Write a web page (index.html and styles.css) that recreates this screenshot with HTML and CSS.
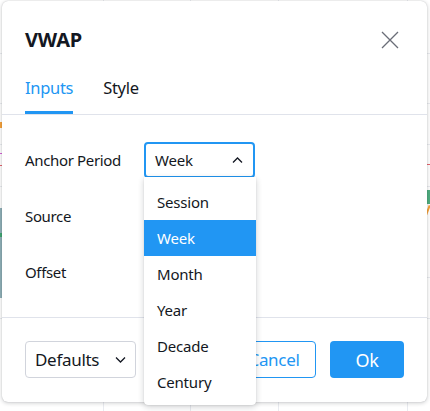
FILE: index.html
```html
<!DOCTYPE html>
<html>
<head>
<meta charset="utf-8">
<link rel="stylesheet" href="styles.css">
</head>
<body>
<div class="chart">
  <div class="mark mark-orange"></div>
  <div class="mark mark-pink"></div>
  <div class="mark mark-red"></div>
  <div class="mark mark-teal"></div>
  <div class="mark mark-green"></div>
  <div class="mark mark-rgreen"></div>
  <div class="mark mark-rorange"></div>
  <div class="mark mark-rred"></div>
</div>
<div class="dialog">
  <div class="header">
    <div class="title">VWAP</div>
    <svg class="close" width="18" height="18" viewBox="0 0 18 18"><path d="M1 1L17 17M17 1L1 17" stroke="#6a6d78" stroke-width="1.3" fill="none"/></svg>
  </div>
  <div class="tabs">
    <div class="tab active">Inputs</div>
    <div class="tab">Style</div>
  </div>
  <div class="body">
    <div class="row">
      <div class="label">Anchor Period</div>
      <div class="select">
        <span>Week</span>
        <svg width="11" height="6" viewBox="0 0 11 6"><path d="M1 5.5L5.5 1L10 5.5" stroke="#131722" stroke-width="1.3" fill="none"/></svg>
      </div>
    </div>
    <div class="row">
      <div class="label">Source</div>
    </div>
    <div class="row">
      <div class="label">Offset</div>
    </div>
  </div>
  <div class="footer">
    <div class="btn defaults">
      <span>Defaults</span>
      <svg width="11" height="6" viewBox="0 0 11 6"><path d="M1 0.5L5.5 5L10 0.5" stroke="#131722" stroke-width="1.3" fill="none"/></svg>
    </div>
    <div class="spacer"></div>
    <div class="btn cancel">Cancel</div>
    <div class="btn ok">Ok</div>
  </div>
  <div class="menu">
    <div class="item">Session</div>
    <div class="item selected">Week</div>
    <div class="item">Month</div>
    <div class="item">Year</div>
    <div class="item">Decade</div>
    <div class="item">Century</div>
  </div>
</div>
</body>
</html>
```

FILE: styles.css
```css
* { box-sizing: border-box; }
html, body { margin: 0; padding: 0; }
body {
  width: 430px;
  height: 411px;
  overflow: hidden;
  position: relative;
  background-color: #ffffff;
  background-image:
    linear-gradient(to right, transparent 103px, #e9ebf0 103px, #e9ebf0 104px, transparent 104px),
    linear-gradient(to right, transparent 190px, #e9ebf0 190px, #e9ebf0 191px, transparent 191px),
    linear-gradient(to right, transparent 278px, #e9ebf0 278px, #e9ebf0 279px, transparent 279px),
    linear-gradient(to right, transparent 407px, #e9ebf0 407px, #e9ebf0 408px, transparent 408px),
    linear-gradient(to bottom, transparent 53px, #e9ebf0 53px, #e9ebf0 54px, transparent 54px),
    linear-gradient(to bottom, transparent 103px, #e9ebf0 103px, #e9ebf0 104px, transparent 104px),
    linear-gradient(to bottom, transparent 144px, #e9ebf0 144px, #e9ebf0 145px, transparent 145px),
    linear-gradient(to bottom, transparent 186px, #e9ebf0 186px, #e9ebf0 187px, transparent 187px),
    linear-gradient(to bottom, transparent 277px, #e9ebf0 277px, #e9ebf0 278px, transparent 278px),
    linear-gradient(to bottom, transparent 318px, #e9ebf0 318px, #e9ebf0 319px, transparent 319px);
  font-family: "Noto Sans", "Open Sans", sans-serif;
  color: #131722;
}
.chart { position: absolute; inset: 0; }
.mark { position: absolute; }
.mark-orange { left: 0; top: 122px; width: 2px; height: 6px; background: #f7a23b; }
.mark-pink { left: 0; top: 153px; width: 2px; height: 1px; background: #d561d6; }
.mark-red { left: 0; top: 165px; width: 3px; height: 1px; background: #e5646e; }
.mark-teal { left: 0; top: 208px; width: 2px; height: 90px; background: #8fb0b8; }
.mark-green { left: 0; top: 233px; width: 2px; height: 4px; background: #3fa671; }
.mark-rgreen { right: 0; top: 190px; width: 3px; height: 14px; background: #4fae80; }
.mark-rorange { right: 1px; top: 205px; width: 2px; height: 10px; background: #f7a23b; transform: rotate(20deg); }
.mark-rred { right: 0; top: 164px; width: 3px; height: 1px; background: #e5646e; }

.dialog {
  position: relative;
  margin: 1px 0 0 2px;
  width: 425px;
  height: 401px;
  background: #fff;
  border-radius: 6px;
  box-shadow: 0 1px 4px rgba(19, 23, 34, 0.22), 0 0 1px rgba(19, 23, 34, 0.25);
  display: flex;
  flex-direction: column;
}
.header {
  display: flex;
  align-items: center;
  justify-content: space-between;
  height: 62px;
  padding: 16px 28px 0 23px;
}
.title {
  font-size: 20px;
  font-weight: 700;
  line-height: 24px;
  letter-spacing: -0.2px;
}
.close { display: block; }
.tabs {
  display: flex;
  gap: 30px;
  padding: 0 0 0 23px;
  height: 52px;
  border-bottom: 1px solid #e0e3eb;
}
.tab {
  font-size: 16.5px;
  line-height: 24px;
  padding-top: 13px;
  letter-spacing: -0.3px;
  border-bottom: 3px solid transparent;
}
.tab.active {
  color: #2196f3;
  border-bottom-color: #2196f3;
}
.body {
  padding: 27px 0 27px 23px;
  display: flex;
  flex-direction: column;
  gap: 20px;
  border-bottom: 1px solid #e0e3eb;
}
.row {
  height: 36px;
  display: flex;
  align-items: center;
}
.label {
  width: 119px;
  font-size: 15px;
  letter-spacing: -0.35px;
}
.select {
  width: 111px;
  height: 36px;
  border: 2px solid #2196f3;
  border-radius: 4px;
  display: flex;
  align-items: center;
  justify-content: space-between;
  padding: 0 10px 0 9px;
  font-size: 15px;
  letter-spacing: -0.2px;
}
.select svg { display: block; }
.footer {
  display: flex;
  align-items: center;
  padding: 23px 23px 24px 23px;
  flex: 1;
}
.spacer { flex: 1; }
.btn {
  height: 37px;
  border-radius: 4px;
  display: flex;
  align-items: center;
  justify-content: center;
  font-size: 17px;
  letter-spacing: -0.3px;
}
.defaults {
  width: 111px;
  border: 1px solid #d1d4dc;
  justify-content: space-between;
  padding: 0 9px 0 9px;
}
.defaults svg { display: block; }
.cancel {
  width: 84px;
  border: 1px solid #2196f3;
  color: #2196f3;
  margin-right: 14px;
}
.ok {
  width: 74px;
  background: #2196f3;
  color: #fff;
  font-size: 18px;
}
.menu {
  position: absolute;
  left: 142px;
  top: 176px;
  width: 112px;
  padding: 7px 0 5px;
  background: #fff;
  border-radius: 0 0 4px 4px;
  box-shadow: 0 2px 6px rgba(19, 23, 34, 0.2), 0 0 1px rgba(19, 23, 34, 0.2);
}
.item {
  height: 36px;
  display: flex;
  align-items: center;
  padding-left: 13px;
  font-size: 15px;
  letter-spacing: -0.2px;
}
.item.selected {
  background: #2196f3;
  color: #fff;
}
```
